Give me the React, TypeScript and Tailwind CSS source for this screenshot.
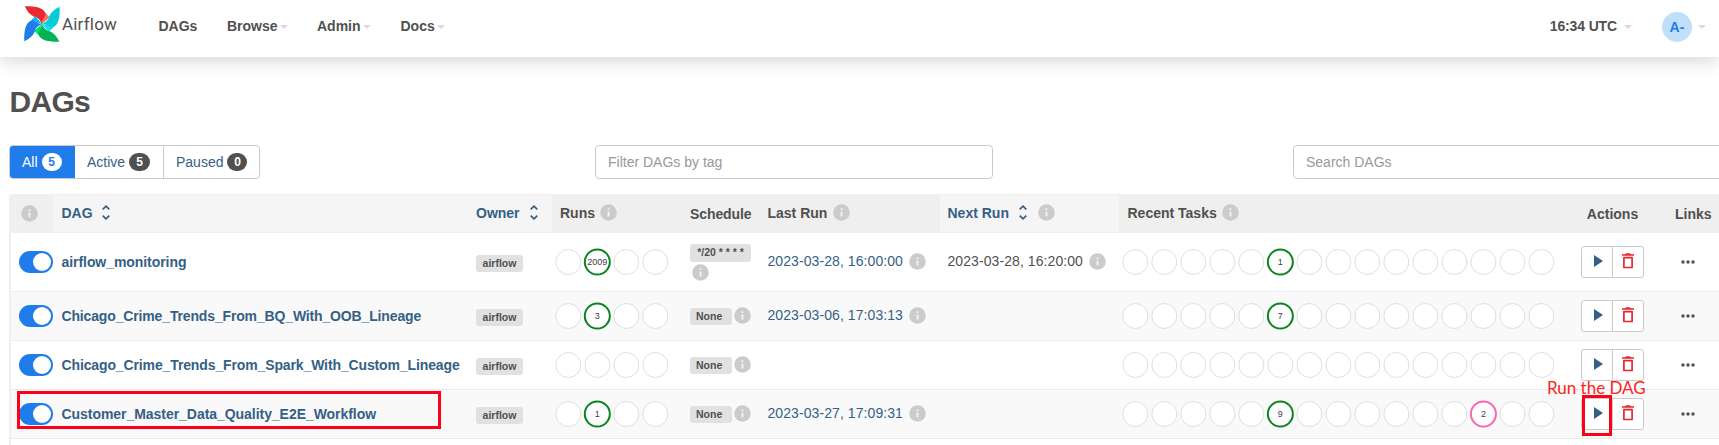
import React from "react";

type Tone = "green" | "pink";
type Mark = { at: number; value: string; tone: Tone };
type Dag = {
  name: string;
  tracking: string;
  schedule: string;
  wrapped?: boolean;
  lastRun?: string;
  nextRun?: string;
  runs?: Mark;
  tasks: Mark[];
};

const dags: Dag[] = [
  {
    name: "airflow_monitoring",
    tracking: "tracking-[-0.06px]",
    schedule: "*/20 * * * *",
    wrapped: true,
    lastRun: "2023-03-28, 16:00:00",
    nextRun: "2023-03-28, 16:20:00",
    runs: { at: 1, value: "2009", tone: "green" },
    tasks: [{ at: 5, value: "1", tone: "green" }],
  },
  {
    name: "Chicago_Crime_Trends_From_BQ_With_OOB_Lineage",
    tracking: "tracking-[-0.15px]",
    schedule: "None",
    lastRun: "2023-03-06, 17:03:13",
    runs: { at: 1, value: "3", tone: "green" },
    tasks: [{ at: 5, value: "7", tone: "green" }],
  },
  {
    name: "Chicago_Crime_Trends_From_Spark_With_Custom_Lineage",
    tracking: "tracking-[-0.125px]",
    schedule: "None",
    tasks: [],
  },
  {
    name: "Customer_Master_Data_Quality_E2E_Workflow",
    tracking: "tracking-[-0.045px]",
    schedule: "None",
    lastRun: "2023-03-27, 17:09:31",
    runs: { at: 1, value: "1", tone: "green" },
    tasks: [
      { at: 5, value: "9", tone: "green" },
      { at: 12, value: "2", tone: "pink" },
    ],
  },
];

const columns =
  "grid grid-cols-[42px_415px_84px_130px_77.5px_180px_179.5px_454px_79px_67px]";

function Caret({ className }: { className: string }) {
  return (
    <svg width="8" height="4" viewBox="0 0 8 4" className={className}>
      <path d="M0 0h8L4 4z" fill="#e3d3e3" />
    </svg>
  );
}

function Info({ className = "" }: { className?: string }) {
  return (
    <svg width="17" height="17" viewBox="0 0 17 17" className={`shrink-0 ${className}`}>
      <circle cx="8.5" cy="8.5" r="8.3" fill="#cbcbcb" />
      <path d="M7.6 4.3h1.8v1.8H7.6zM7.6 7.4h1.8v5.2H7.6z" fill="#f5f5f5" />
    </svg>
  );
}

function Sort({ className }: { className: string }) {
  return (
    <svg width="8" height="15" viewBox="0 0 8 15" fill="none" stroke="#355f86" strokeWidth="1.7" className={className}>
      <path d="M0.7 4.4L4 1.2l3.3 3.2M0.7 10.6L4 13.8l3.3-3.2" />
    </svg>
  );
}

function Circles({ count, marks }: { count: number; marks: Mark[] }) {
  return (
    <svg width={count * 29.01} height="28" viewBox={`0 0 ${count * 29.01} 28`} className="shrink-0">
      {Array.from({ length: count }, (_, i) => {
        const mark = marks.find((m) => m.at === i);
        const cx = 14.3 + i * 29.01;
        const stroke = mark ? (mark.tone === "green" ? "#0a8420" : "#fb63b5") : "#dedede";
        return (
          <g key={i}>
            <circle cx={cx} cy="14" r="12.5" fill="#fff" stroke={stroke} strokeWidth={mark ? 2 : 1} />
            {mark && (
              <text x={cx} y="17.2" textAnchor="middle" fontSize="9" fill="#3c3b3a">
                {mark.value}
              </text>
            )}
          </g>
        );
      })}
    </svg>
  );
}

const blades = [
  { turn: "rotate(0 18 18)", body: "#e8292f", fold: "#fd7266" },
  { turn: "rotate(90 18 18)", body: "#04cdd7", fold: "#11e1ee" },
  { turn: "rotate(180 18 18)", body: "#04b253", fold: "#00e560" },
  { turn: "rotate(270 18 18)", body: "#217ceb", fold: "#0cb6ff" },
];

function Logo() {
  return (
    <svg width="36" height="36" viewBox="0 0 36 36">
      {blades.map((blade) => (
        <g key={blade.turn} transform={blade.turn}>
          <path d="M20.500 6.500C22.500 7.500 24.500 9.500 25.500 11.500L18 18.200z" fill={blade.fold} />
          <path d="M.7.3C8 0 15 .8 18.500 3.500C21 5.500 22 7.500 21.300 9.500C19.500 12.500 18.200 14.500 18 18.200C16 13.500 14 11.500 10 10.700C5.500 8.500 3 5 .7.300z" fill={blade.body} />
        </g>
      ))}
    </svg>
  );
}

function Navbar() {
  return (
    <header className="flex h-[57px] shrink-0 bg-white text-sm font-bold shadow-[0_3px_18px_rgba(0,0,0,0.18)]">
      <div className="flex w-[158.500px] pt-[6px] pl-6">
        <Logo />
        <span className="ml-[2px] pt-2 font-['Roboto',sans-serif] text-[17px] leading-5 font-normal tracking-[0.2px]">Airflow</span>
      </div>
      <nav className="flex pt-4 leading-5">
        <a className="w-[68.500px]">DAGs</a>
        <a className="flex w-[90px]">Browse<Caret className="mt-[9px] ml-[2px]" /></a>
        <a className="flex w-[83.500px]">Admin<Caret className="mt-[9px] ml-[2px]" /></a>
        <a className="flex">Docs<Caret className="mt-[9px] ml-[2px]" /></a>
      </nav>
      <div className="mr-[13px] ml-auto flex pt-4 leading-5">
        <span className="tracking-[-0.14px]">16:34 UTC</span>
        <Caret className="mt-[9px] ml-[7px]" />
        <span className="-mt-1 ml-[30px] flex size-[30px] items-center justify-center rounded-full bg-[#c0dffa] text-[#217ceb]">A-</span>
        <Caret className="mt-[9px] ml-[6px]" />
      </div>
    </header>
  );
}

function Filters() {
  return (
    <div className="flex h-[34px] shrink-0 pl-[9px] text-sm text-[#355f86]">
      <div className="flex w-[251px] shrink-0 overflow-hidden rounded-[4px] border border-[#cbcbcb] leading-5">
        <div className="-m-px flex w-[66px] shrink-0 items-center bg-[#217ceb] pl-[13px] text-white">
          All
          <b className="ml-1 flex h-[18px] w-5 items-center justify-center rounded-full bg-white text-xs text-[#217ceb]">5</b>
        </div>
        <div className="flex w-[90px] shrink-0 items-center border-r border-[#cbcbcb] pl-[13px]">
          Active
          <b className="ml-1 flex h-[18px] w-[21px] items-center justify-center rounded-full bg-[#51504f] text-xs text-white">5</b>
        </div>
        <div className="flex shrink-0 items-center pl-3">
          Paused
          <b className="ml-1 flex h-[18px] w-5 items-center justify-center rounded-full bg-[#51504f] text-xs text-white">0</b>
        </div>
      </div>
      <div className="ml-[335px] flex w-[398px] shrink-0 items-center rounded-[4px] border border-[#cbcbcb] pl-3 text-[#999]">Filter DAGs by tag</div>
      <div className="ml-[300px] flex w-[440px] shrink-0 items-center rounded-[4px] border border-[#cbcbcb] pl-3 text-[#999]">Search DAGs</div>
    </div>
  );
}

function TableHead() {
  return (
    <div className={`${columns} h-[39px] border-y border-[#efefef] bg-[#efefef] text-sm leading-5 font-bold`}>
      <div className="flex items-center pb-px pl-[10px]"><Info /></div>
      <div className="flex items-center bg-[#f5f5f5] pb-[2px] pl-[8.500px] text-[#355f86]">DAG<Sort className="ml-[9px]" /></div>
      <div className="flex items-center bg-[#f5f5f5] pb-[2px] pl-2 text-[#355f86]">Owner<Sort className="ml-[10px]" /></div>
      <div className="flex items-center pb-[2px] pl-2">Runs<Info className="ml-[5px]" /></div>
      <div className="flex items-center pl-2 tracking-[-0.1px]">Schedule</div>
      <div className="flex items-center pb-[2px] pl-2">Last Run<Info className="ml-[5.500px]" /></div>
      <div className="flex items-center bg-[#f5f5f5] pb-[2px] pl-2 text-[#355f86]">Next Run<Sort className="ml-[10px]" /><Info className="ml-[11px]" /></div>
      <div className="flex items-center pb-[2px] pl-[8.500px]">Recent Tasks<Info className="ml-[5px]" /></div>
      <div className="flex items-center justify-center">Actions</div>
      <div className="flex items-center pl-[23px]">Links</div>
    </div>
  );
}

function Tag({ children, className = "" }: { children: React.ReactNode; className?: string }) {
  return (
    <span className={`flex h-[17px] items-center rounded-[3px] bg-[#e1e1e1] px-[6px] text-[10.500px] leading-none font-bold whitespace-nowrap ${className}`}>
      {children}
    </span>
  );
}

function Timestamp({ value }: { value?: string }) {
  return (
    <div className="flex items-center pb-px pl-2">
      {value && (
        <>
          <span className="pb-px tracking-[0.08px] whitespace-nowrap">{value}</span>
          <Info className="ml-[6px]" />
        </>
      )}
    </div>
  );
}

function Row({ dag, first, shaded }: { dag: Dag; first: boolean; shaded: boolean }) {
  return (
    <div
      className={`${columns} items-center text-sm leading-5 ${first ? "h-[58px]" : "h-[49px] border-t border-[#ebebeb]"} ${shaded ? "bg-[#f9f9f9]" : "bg-white"}`}
    >
      <div className="pl-2">
        <span className="flex h-[22px] w-[34px] items-center justify-end rounded-full bg-[#217ceb] pr-[2px]">
          <span className="size-[18px] rounded-full bg-white" />
        </span>
      </div>
      <div className={`pl-[8.500px] font-bold whitespace-nowrap text-[#355f86] ${dag.tracking}`}>{dag.name}</div>
      <div className="flex pt-[3px] pl-2"><Tag className="w-[47px] justify-center">airflow</Tag></div>
      <div className="flex pb-px pl-[2px]"><Circles count={4} marks={dag.runs ? [dag.runs] : []} /></div>
      {dag.wrapped ? (
        <div className="flex flex-col items-start pl-2">
          <Tag className="h-[18px] w-[61px] justify-center">{dag.schedule}</Tag>
          <Info className="mt-[2px] ml-[1.500px]" />
        </div>
      ) : (
        <div className="flex items-center pl-2">
          <Tag className="w-[42px]">{dag.schedule}</Tag>
          <Info className="-mt-[2px] ml-[1.500px]" />
        </div>
      )}
      <div className="text-[#355f86]"><Timestamp value={dag.lastRun} /></div>
      <Timestamp value={dag.nextRun} />
      <div className="flex pb-px pl-[2px]"><Circles count={15} marks={dag.tasks} /></div>
      <div className="flex justify-center">
        <div className="flex h-8 w-[63px] rounded-[3px] border border-[#cbcbcb] bg-white">
          <span className="flex w-[31px] items-center border-r border-[#cbcbcb] pl-3">
            <svg width="9" height="12" viewBox="0 0 9 12" className="-mt-[2px]"><path d="M0 0l9 6-9 6z" fill="#355f86" /></svg>
          </span>
          <span className="flex flex-1 items-center justify-center">
            <svg width="12" height="16" viewBox="0 0 12 16" className="-mt-[2px]">
              <path d="M0 1.300h3L4.500.3h3l1.500 1h3v1.500H0z" fill="#e8262d" />
              <path d="M1.900 4.700h8.200v9.800H1.900z" fill="none" stroke="#e8262d" strokeWidth="1.700" strokeLinejoin="round" />
            </svg>
          </span>
        </div>
      </div>
      <div className="pb-px pl-[29px]">
        <svg width="14" height="4" viewBox="0 0 14 4" fill="#51504f" className="block">
          <circle cx="2" cy="2" r="1.700" /><circle cx="7" cy="2" r="1.700" /><circle cx="12" cy="2" r="1.700" />
        </svg>
      </div>
    </div>
  );
}

export default function App() {
  return (
    <div className="relative flex h-[445px] w-[1719px] flex-col overflow-hidden bg-white font-['Liberation_Sans',Arial,sans-serif] text-[#51504f]">
      <Navbar />
      <h1 className="mt-[27px] mb-[25px] pl-[9.500px] text-[30px] leading-9 font-bold tracking-[-0.7px]">DAGs</h1>
      <Filters />
      <main className="mt-[15px] ml-[9px] flex-1 rounded-tl-[3px] border-l-2 border-[#efefef]">
        <TableHead />
        {dags.map((dag, i) => (
          <Row key={dag.name} dag={dag} first={i === 0} shaded={i % 2 === 1} />
        ))}
        <div className="border-t border-[#ebebeb]" />
      </main>
      <div className="absolute top-[391px] left-[17px] h-[38px] w-[424px] border-3 border-[#ff0019]" />
      <div className="absolute top-[395px] left-[1582px] h-[41px] w-[30px] border-3 border-[#ff0019]" />
      <div className="absolute top-[378px] left-[1547px] font-['Lato',sans-serif] text-[17px] leading-5 whitespace-nowrap text-[#ff2318]">Run the DAG</div>
    </div>
  );
}
